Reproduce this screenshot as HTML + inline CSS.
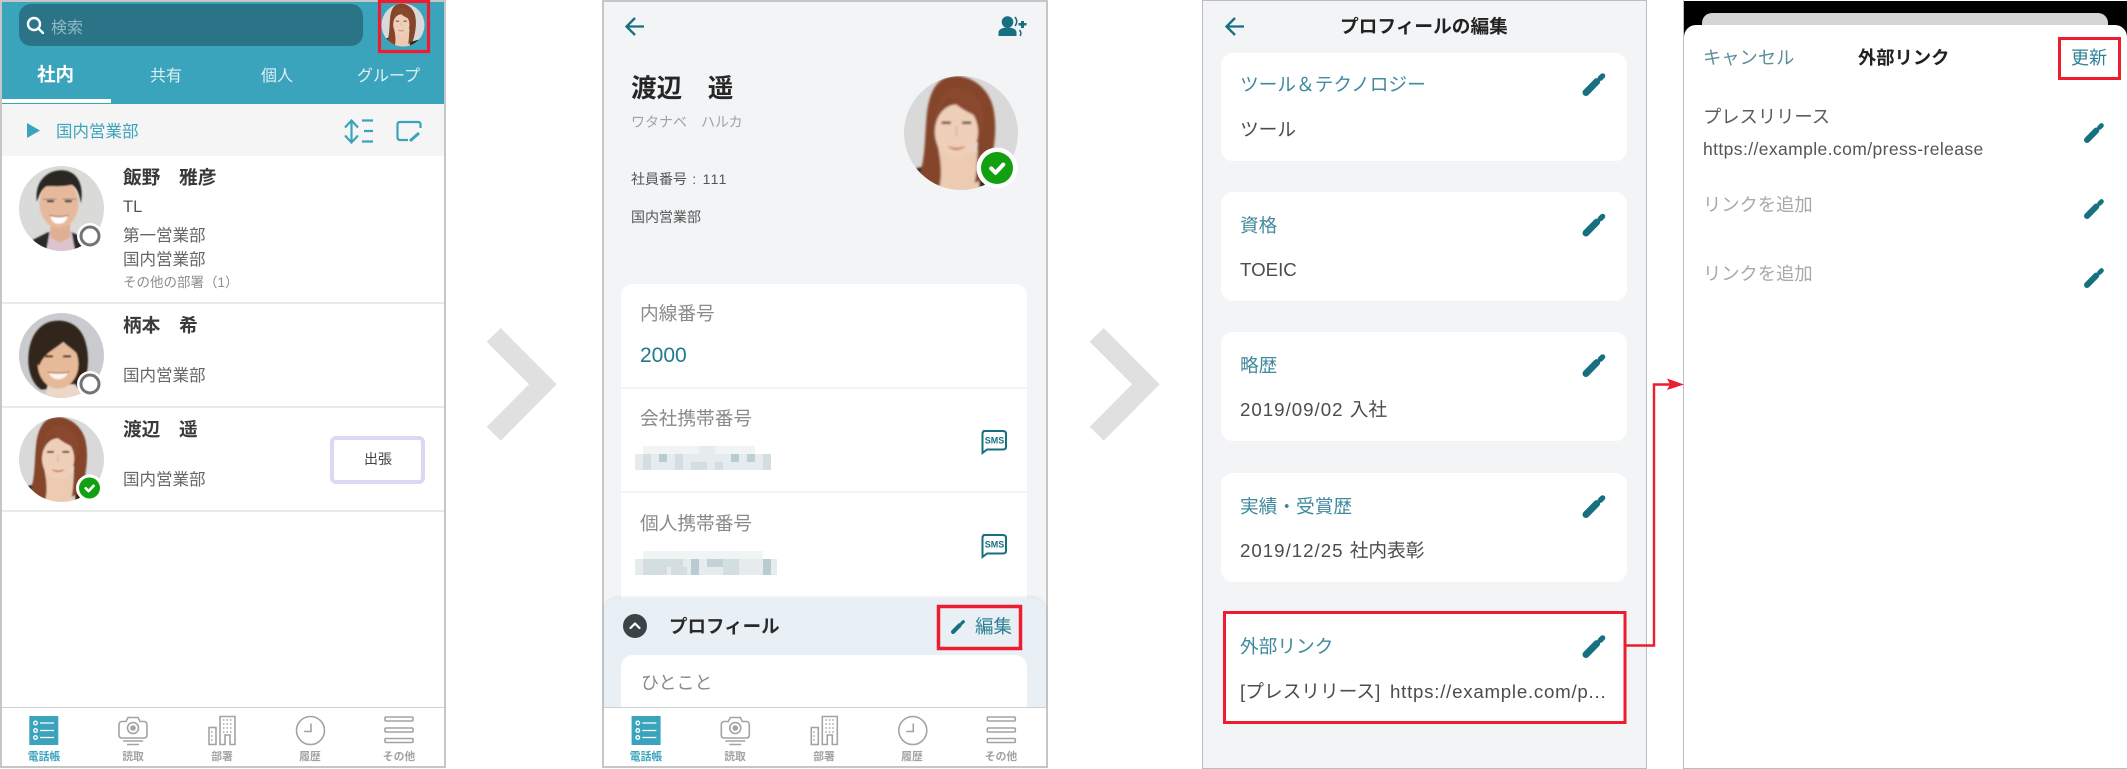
<!DOCTYPE html>
<html lang="ja"><head><meta charset="utf-8"><title>プロフィールの編集</title>
<style>
html,body{margin:0;padding:0;background:#fff}
#r{position:relative;width:2127px;height:769px;overflow:hidden;background:#fff;font-family:"Liberation Sans","Noto Sans CJK JP",sans-serif;filter:blur(.3px)}
#r div{position:absolute;box-sizing:border-box}
.t{white-space:nowrap;line-height:1;z-index:5}
svg.o{position:absolute;left:0;top:0;z-index:4}
.b{font-weight:700}
.n{font-size:18.7px;font-weight:700;color:#3a3a3a}
.d{font-size:16.5px;color:#666}
.g{font-size:18.7px;color:#8a8a8a}
.l{font-size:18.7px;color:#3f8a9c}
.v{font-size:18.7px;color:#4c4c4c}
.tb{font-size:10.8px;color:#a3a3a3;font-weight:700;width:60px;text-align:center}
.card{background:#fff;border-radius:12px}
</style></head><body><div id="r">

<!-- Panel 1 -->
<div style="left:0;top:0;width:446px;height:768px;background:#fff;border:2px solid #c6c6c6"></div>
<div style="left:2px;top:2px;width:442px;height:102px;background:#3ba4bd"></div>
<div style="left:19px;top:4px;width:344px;height:42px;background:#2b7386;border-radius:12px"></div>
<div style="left:2px;top:99px;width:109px;height:4px;background:#fff"></div>
<div style="left:2px;top:104px;width:442px;height:52px;background:#f5f5f5"></div>
<div style="left:2px;top:302px;width:442px;height:2px;background:#e9e9e9"></div>
<div style="left:2px;top:406px;width:442px;height:2px;background:#e9e9e9"></div>
<div style="left:2px;top:510px;width:442px;height:2px;background:#e9e9e9"></div>
<div style="left:330px;top:436px;width:95px;height:48px;border:4px solid #d9d9f5;border-radius:6px;background:#fff"></div>
<div style="left:2px;top:707px;width:442px;height:1px;background:#cfcfcf"></div>

<div class="t" style="left:51px;top:21px;font-size:16px;color:#8fbac5">検索</div>
<div class="t b" style="left:37px;top:66px;font-size:18.5px;color:#fff">社内</div>
<div class="t" style="left:150px;top:69px;font-size:16px;color:#dff0f4">共有</div>
<div class="t" style="left:261px;top:69px;font-size:16px;color:#dff0f4">個人</div>
<div class="t" style="left:357px;top:69px;font-size:16px;color:#dff0f4">グループ</div>
<div class="t" style="left:56px;top:124px;font-size:16.5px;color:#3ba4bd">国内営業部</div>
<div class="t n" style="left:123px;top:169px">飯野　雅彦</div>
<div class="t" style="left:123px;top:199px;font-size:16.5px;color:#555">TL</div>
<div class="t d" style="left:123px;top:228px">第一営業部</div>
<div class="t d" style="left:123px;top:252px">国内営業部</div>
<div class="t" style="left:123px;top:276px;font-size:13.5px;color:#8d8d8d">その他の部署（1）</div>
<div class="t n" style="left:123px;top:317px">柄本　希</div>
<div class="t d" style="left:123px;top:368px">国内営業部</div>
<div class="t n" style="left:123px;top:421px">渡辺　遥</div>
<div class="t d" style="left:123px;top:472px">国内営業部</div>
<div class="t" style="left:364px;top:452px;font-size:14px;color:#444">出張</div>
<div class="t tb" style="left:14px;top:752px;color:#3ba4bd">電話帳</div>
<div class="t tb" style="left:103px;top:752px">読取</div>
<div class="t tb" style="left:192px;top:752px">部署</div>
<div class="t tb" style="left:280px;top:752px">履歴</div>
<div class="t tb" style="left:369px;top:752px">その他</div>

<!-- Panel 2 -->
<div style="left:602px;top:0;width:446px;height:768px;background:#f2f4f6;border:2px solid #c6c6c6;overflow:hidden"></div>
<div style="left:621px;top:284px;width:406px;height:330px;background:#fff;border-radius:12px 12px 0 0"></div>
<div style="left:621px;top:387px;width:406px;height:2px;background:#f1f3f5"></div>
<div style="left:621px;top:491px;width:406px;height:2px;background:#f1f3f5"></div>
<div style="left:604px;top:598px;width:442px;height:111px;background:#e8f0f5;border-radius:14px 14px 0 0;box-shadow:0 -1px 3px rgba(0,0,0,.09)"></div>
<div style="left:621px;top:655px;width:406px;height:53px;background:#fff;border-radius:12px 12px 0 0"></div>
<div style="left:604px;top:707px;width:442px;height:59px;background:#fff;border-top:1px solid #cfcfcf"></div>

<div class="t b" style="left:631px;top:77px;font-size:25.6px;color:#262626">渡辺　遥</div>
<div class="t" style="left:631px;top:115px;font-size:14px;color:#a2a2a2">ワタナベ　ハルカ</div>
<div class="t" style="left:631px;top:172px;font-size:14px;color:#555">社員番号<span style="letter-spacing:1.3px"> : 111</span></div>
<div class="t" style="left:631px;top:210px;font-size:14px;color:#555">国内営業部</div>
<div class="t g" style="left:640px;top:305px">内線番号</div>
<div class="t" style="left:640px;top:345px;font-size:21px;color:#1f7a8f">2000</div>
<div class="t g" style="left:640px;top:410px">会社携帯番号</div>
<div class="t g" style="left:640px;top:515px">個人携帯番号</div>
<div class="t b" style="left:669px;top:618px;font-size:18.5px;color:#2a2a2a">プロフィール</div>
<div class="t" style="left:975px;top:618px;font-size:18.5px;color:#2d8296">編集</div>
<div class="t g" style="left:641px;top:674px;font-size:18px">ひとこと</div>
<div class="t tb" style="left:616px;top:752px;color:#3ba4bd">電話帳</div>
<div class="t tb" style="left:705px;top:752px">読取</div>
<div class="t tb" style="left:794px;top:752px">部署</div>
<div class="t tb" style="left:882px;top:752px">履歴</div>
<div class="t tb" style="left:971px;top:752px">その他</div>

<!-- Panel 3 -->
<div style="left:1202px;top:0;width:445px;height:769px;background:#f2f4f6;border:1.5px solid #bdbdbd"></div>
<div class="card" style="left:1221px;top:53px;width:406px;height:108px"></div>
<div class="card" style="left:1221px;top:192px;width:406px;height:109px"></div>
<div class="card" style="left:1221px;top:332px;width:406px;height:109px"></div>
<div class="card" style="left:1221px;top:473px;width:406px;height:109px"></div>
<div style="left:1223px;top:611px;width:403px;height:113px;background:#fff"></div>

<div class="t b" style="left:1340px;top:18px;font-size:18.7px;color:#222">プロフィールの編集</div>
<div class="t l" style="left:1240px;top:76px">ツール＆テクノロジー</div>
<div class="t v" style="left:1240px;top:121px">ツール</div>
<div class="t l" style="left:1240px;top:217px">資格</div>
<div class="t v" style="left:1240px;top:261px">TOEIC</div>
<div class="t l" style="left:1240px;top:357px">略歴</div>
<div class="t v" style="left:1240px;top:401px"><span style="letter-spacing:1px">2019/09/02 </span>入社</div>
<div class="t l" style="left:1240px;top:498px">実績・受賞歴</div>
<div class="t v" style="left:1240px;top:542px"><span style="letter-spacing:1px">2019/12/25 </span>社内表彰</div>
<div class="t l" style="left:1240px;top:638px">外部リンク</div>
<div class="t v" style="left:1240px;top:683px">[プレスリリース]</div>
<div class="t v" style="left:1390px;top:683px;letter-spacing:.75px">https://example.com/p...</div>

<!-- Panel 4 -->
<div style="left:1683px;top:0;width:444px;height:769px;background:#fff;border-left:1.5px solid #bdbdbd;border-bottom:1.5px solid #bdbdbd"></div>
<div style="left:1684px;top:1px;width:443px;height:36px;background:#000"></div>
<div style="left:1702px;top:13px;width:406px;height:24px;background:#d4d6d5;border-radius:10px 10px 0 0"></div>
<div style="left:1684px;top:25px;width:443px;height:742px;background:#fff;border-radius:12px 12px 0 0"></div>

<div class="t" style="left:1703px;top:49px;font-size:18.3px;color:#5f8e9c">キャンセル</div>
<div class="t b" style="left:1858px;top:49px;font-size:18.3px;color:#222">外部リンク</div>
<div class="t" style="left:2071px;top:49px;font-size:18px;color:#2d8296">更新</div>
<div class="t" style="left:1703px;top:108px;font-size:18.3px;color:#5c5c5c">プレスリリース</div>
<div class="t" style="left:1703px;top:141px;font-size:17.5px;letter-spacing:.4px;color:#555">https://example.com/press-release</div>
<div class="t" style="left:1703px;top:196px;font-size:18.3px;color:#a9a9a9">リンクを追加</div>
<div class="t" style="left:1703px;top:265px;font-size:18.3px;color:#a9a9a9">リンクを追加</div>

<svg class="o" width="2127" height="769" viewBox="0 0 2127 769" xmlns="http://www.w3.org/2000/svg">
<defs>
<filter id="sf" x="-10%" y="-10%" width="120%" height="120%"><feGaussianBlur stdDeviation=".9"/></filter>
<clipPath id="cc"><circle cx="50" cy="50" r="50"/></clipPath>
<symbol id="pen" viewBox="0 0 24 24"><path d="M3.6 20.4 14.8 9" fill="none" stroke="#17707f" stroke-width="7.2" stroke-linecap="round"/><path d="M18.6 5.4 21 3" fill="none" stroke="#17707f" stroke-width="5.6" stroke-linecap="round"/></symbol>

<symbol id="man" viewBox="0 0 100 100"><g clip-path="url(#cc)">
<rect width="100" height="100" fill="#dadad9"/>
<g filter="url(#sf)">
<path d="M10 100 14 88 34 78H62L80 86 86 100Z" fill="#2c2a2c"/>
<path d="M32 100 36 78H62L66 100Z" fill="#dcc3cd"/>
<path d="M37 66H60V84L48 90 37 84Z" fill="#dfaf92"/>
<ellipse cx="47" cy="44" rx="23" ry="29" fill="#e6b99c"/>
<path d="M21 42C18 18 33 5 50 5 66 5 77 18 73 44 71 34 69 26 62 22 50 25 38 23 32 24 26 28 24 34 21 42Z" fill="#2b2522"/>
<path d="M28 39H44M51 39H67" stroke="#a08d83" stroke-width="1.5"/>
<path d="M33 41.5H41M54 41.5H62" stroke="#3b2c26" stroke-width="2.3"/>
<path d="M37 59Q47 62 57 59 55 68 47 68 39 68 37 59Z" fill="#fff"/>
<path d="M36 58Q47 61 58 58" stroke="#a45e4d" stroke-width="1.2" fill="none"/>
</g></g></symbol>

<symbol id="wk" viewBox="0 0 100 100"><g clip-path="url(#cc)">
<rect width="100" height="100" fill="#c9cbcf"/>
<g filter="url(#sf)">
<path d="M48 9C24 8 12 28 11 52 10 68 16 84 26 90L74 88C80 76 83 58 80 42 77 22 66 10 48 9Z" fill="#33251f"/>
<path d="M30 100 34 84H66L76 100Z" fill="#ecd8c8"/>
<ellipse cx="46" cy="60" rx="24" ry="29" fill="#e6b998"/>
<path d="M20 58C20 40 30 26 44 24 56 26 68 34 72 52 66 44 58 40 52 34 44 42 30 46 24 62Z" fill="#33251f"/>
<path d="M31 51H40M52 51H61" stroke="#2d201b" stroke-width="2.3"/>
<path d="M35 70Q46 72 58 70 54 78 46 78 38 78 35 70Z" fill="#fbf4f0"/>
<path d="M34 69.5Q46 72 59 69.5" stroke="#a8504a" stroke-width="1.2" fill="none"/>
</g></g></symbol>

<symbol id="ww" viewBox="0 0 100 100"><g clip-path="url(#cc)">
<rect width="100" height="100" fill="#d9d9da"/>
<g filter="url(#sf)">
<path d="M0 84 30 76V100H0ZM60 92 100 80V100H60Z" fill="#26211f"/>
<path d="M30 66H66V100H30Z" fill="#eccbb2"/>
<path d="M45 0C29 0 22 14 20 34 18 54 19 74 13 87 18 92 26 96 31 97 34 86 32 72 29 58L65 58C64 72 64 84 62 94 66 92 71 90 73 87 78 72 82 50 79 32 77 14 62 0 45 0Z" fill="#84452a"/>
<ellipse cx="46" cy="49" rx="19" ry="24" fill="#f0cfb8"/>
<path d="M27 52C27 34 32 26 40 18 44 26 56 32 65 36L67 54C75 30 64 10 46 10 34 10 26 28 27 52Z" fill="#8a4a2e"/>
<path d="M33 41H41M51 41H59" stroke="#33241e" stroke-width="2"/>
<path d="M46 44V53" stroke="#e2b79c" stroke-width="2"/>
<path d="M39 62Q46 65 53 62 46 67 39 62Z" fill="#c4705e" stroke="#c4705e" stroke-width=".8"/>
</g></g></symbol>

<symbol id="chk" viewBox="0 0 24 24"><path d="M6 12.5 10.5 17 18.5 8.5" fill="none" stroke="#fff" stroke-width="4.2" stroke-linecap="round" stroke-linejoin="round"/></symbol>

<g id="tabs" fill="none" stroke="#a3a3a3" stroke-width="1.6">
<rect x="29.3" y="716" width="29" height="29" fill="#3ba4bd" stroke="none"/>
<g stroke="#fff" stroke-width="1.3"><circle cx="35.5" cy="723" r="1.8"/><circle cx="35.5" cy="730.5" r="1.8"/><circle cx="35.5" cy="737.5" r="1.8"/><path d="M40 723H54M40 730.5H54M40 737.5H54"/></g>
<path d="M119 725Q119 721.5 122 721.5H126L128 717.5H138L140 721.5H144Q147 721.5 147 725V735Q147 738 144 738H122Q119 738 119 735Z"/><circle cx="133" cy="728" r="5.5"/><circle cx="133" cy="728" r="2" fill="#a3a3a3"/><path d="M123 741H143M127 744.5H139"/>
<rect x="209" y="727.5" width="7" height="17"/><path d="M220 744.5V716.5H235V744.5H230V735H225V744.5Z"/>
<path d="M223 720h9M223 724h9M223 728h9M223 732h9M211 732h3M211 736h3M211 740h3" stroke-dasharray="1.5 2"/>
<circle cx="310.5" cy="730.5" r="14"/><path d="M311 723.5V731.5H304"/>
<rect x="385" y="717" width="28" height="4" rx="1"/><rect x="385" y="728" width="28" height="4" rx="1"/><rect x="385" y="738.5" width="28" height="4" rx="1"/>
</g>
</defs>

<!-- big chevrons -->
<path d="M486.7 341.7 500.7 328 556.7 384.3 500.7 440.7 486.7 426.7 529 384.3Z" fill="#e0e0e0"/>
<path d="M1089.7 341.7 1103.7 328 1159.7 384.3 1103.7 440.7 1089.7 426.7 1132 384.3Z" fill="#e0e0e0"/>

<!-- panel 1 icons -->
<g fill="none" stroke="#fff" stroke-width="2.4"><circle cx="34" cy="24" r="6"/><path d="M38.5 28.5 43 33" stroke-linecap="round"/></g>
<use href="#ww" x="381.5" y="3.5" width="43" height="43"/>
<rect x="379.5" y="1.5" width="49" height="50" fill="none" stroke="#ed1c2e" stroke-width="3.2"/>
<path d="M27 123 40 130.5 27 138Z" fill="#3ba4bd"/>
<g fill="none" stroke="#3ba4bd" stroke-width="2.2">
<path d="M351.5 121V142M345 127.5 351.5 120.5 358 127.5M345 135.5 351.5 142.5 358 135.5"/>
<path d="M362 120.5H373M364 131H373M362 141.5H373"/>
<path d="M408 140H400Q397.5 140 397.5 137.5V124.5Q397.5 122 400 122H418Q420.5 122 420.5 124.5V128"/>
<path d="M410 141 419 133" stroke-width="3"/>
</g>
<use href="#man" x="19" y="166" width="85" height="85"/>
<circle cx="90" cy="236" r="13" fill="#fff"/><circle cx="90" cy="236" r="9" fill="none" stroke="#737373" stroke-width="3"/>
<use href="#wk" x="19" y="313" width="85" height="85"/>
<circle cx="90" cy="384" r="13" fill="#fff"/><circle cx="90" cy="384" r="9" fill="none" stroke="#737373" stroke-width="3"/>
<use href="#ww" x="19" y="417" width="85" height="85"/>
<circle cx="89.5" cy="488" r="13.5" fill="#fff"/><circle cx="89.5" cy="488" r="10.5" fill="#12a012"/>
<use href="#chk" x="82" y="480.5" width="15" height="15"/>
<use href="#tabs"/>

<!-- panel 2 icons -->
<path d="M644 26.5H627M635 18 626.5 26.5 635 35" fill="none" stroke="#17707f" stroke-width="2.3"/>
<g fill="#17707f"><circle cx="1007.5" cy="22" r="5.8"/><path d="M998.5 36V32.5C998.5 29 1003 27.5 1007.5 27.5 1012 27.5 1016.5 29 1016.5 32.5V36Z"/><path d="M1021 21H1024V23H1026.5V25.5H1024V28H1021V25.5H1018.5V23H1021Z"/></g>
<path d="M1015 17Q1018.5 21.5 1015 26M1019.5 30Q1022 33 1020 36" fill="none" stroke="#17707f" stroke-width="1.5"/>
<use href="#ww" x="904" y="76" width="114" height="114"/>
<circle cx="997" cy="168" r="20.5" fill="#fff"/><circle cx="997" cy="168" r="16" fill="#12a012"/>
<use href="#chk" x="985.5" y="156.5" width="23" height="23"/>

<!-- blurred phone numbers -->
<g>
<rect x="635" y="454" width="136" height="16" fill="#e6ecee"/><rect x="643" y="446" width="112" height="8" fill="#f1f4f5"/>
<g fill="#d3dee2"><rect x="643" y="454" width="8" height="16"/><rect x="659" y="454" width="8" height="8" fill="#b9ccd2"/><rect x="675" y="454" width="8" height="16"/><rect x="691" y="462" width="16" height="8"/><rect x="715" y="462" width="8" height="8"/><rect x="731" y="454" width="8" height="8" fill="#b9ccd2"/><rect x="747" y="454" width="8" height="8" fill="#bfd0d5"/><rect x="763" y="454" width="8" height="16"/><rect x="699" y="446" width="16" height="8" fill="#e6ecee"/></g>
<rect x="635" y="559" width="142" height="16" fill="#e6ecee"/><rect x="643" y="551" width="120" height="8" fill="#f1f4f5"/>
<g fill="#d3dee2"><rect x="643" y="559" width="24" height="16"/><rect x="667" y="559" width="16" height="8"/><rect x="691" y="559" width="8" height="16" fill="#b9ccd2"/><rect x="707" y="559" width="16" height="8" fill="#c3d2d7"/><rect x="723" y="559" width="16" height="16"/><rect x="763" y="559" width="8" height="16" fill="#b9ccd2"/><rect x="671" y="567" width="16" height="8"/></g>
</g>
<g fill="none" stroke="#17707f" stroke-width="2">
<path d="M983 431H1003Q1006 431 1006 434V447Q1006 449.5 1003 449.5H987L982.5 453V434Q982.5 431 985 431Z"/>
<path d="M983 535H1003Q1006 535 1006 538V551Q1006 553.5 1003 553.5H987L982.5 557V538Q982.5 535 985 535Z"/>
</g>
<text x="994.5" y="443.5" font-size="9" font-weight="700" text-anchor="middle" fill="#17707f" font-family="Liberation Sans,sans-serif">SMS</text>
<text x="994.5" y="547.5" font-size="9" font-weight="700" text-anchor="middle" fill="#17707f" font-family="Liberation Sans,sans-serif">SMS</text>
<circle cx="635" cy="626" r="12" fill="#3a4346"/>
<path d="M630.5 628 635 623.5 639.5 628" fill="none" stroke="#fff" stroke-width="2.2" stroke-linecap="round" stroke-linejoin="round"/>
<rect x="938.5" y="606.5" width="82" height="42" fill="none" stroke="#ed1c2e" stroke-width="3.5"/>
<use href="#pen" x="951" y="620" width="14" height="14"/>
<use href="#tabs" transform="translate(602.3 0)"/>

<!-- panel 3 icons -->
<path d="M1244 26.5H1227M1235 18 1226.5 26.5 1235 35" fill="none" stroke="#17707f" stroke-width="2.3"/>
<use href="#pen" x="1582.5" y="73" width="23" height="23"/>
<use href="#pen" x="1582.5" y="213.5" width="23" height="23"/>
<use href="#pen" x="1582.5" y="354" width="23" height="23"/>
<use href="#pen" x="1582.5" y="495" width="23" height="23"/>
<use href="#pen" x="1582.5" y="635" width="23" height="23"/>
<rect x="1224.5" y="612.5" width="400.5" height="110" fill="none" stroke="#ed1c2e" stroke-width="3"/>
<path d="M1626 645.5H1654V384.5H1670" fill="none" stroke="#ed1c2e" stroke-width="2.4"/>
<path d="M1667 378.5 1684 384.5 1667 390 1670 384.5Z" fill="#ed1c2e"/>

<!-- panel 4 icons -->
<rect x="2059.5" y="38.5" width="60" height="40" fill="none" stroke="#ed1c2e" stroke-width="3"/>
<use href="#pen" x="2084" y="123" width="20" height="20"/>
<use href="#pen" x="2084" y="199" width="20" height="20"/>
<use href="#pen" x="2084" y="268" width="20" height="20"/>
</svg>
</div></body></html>
